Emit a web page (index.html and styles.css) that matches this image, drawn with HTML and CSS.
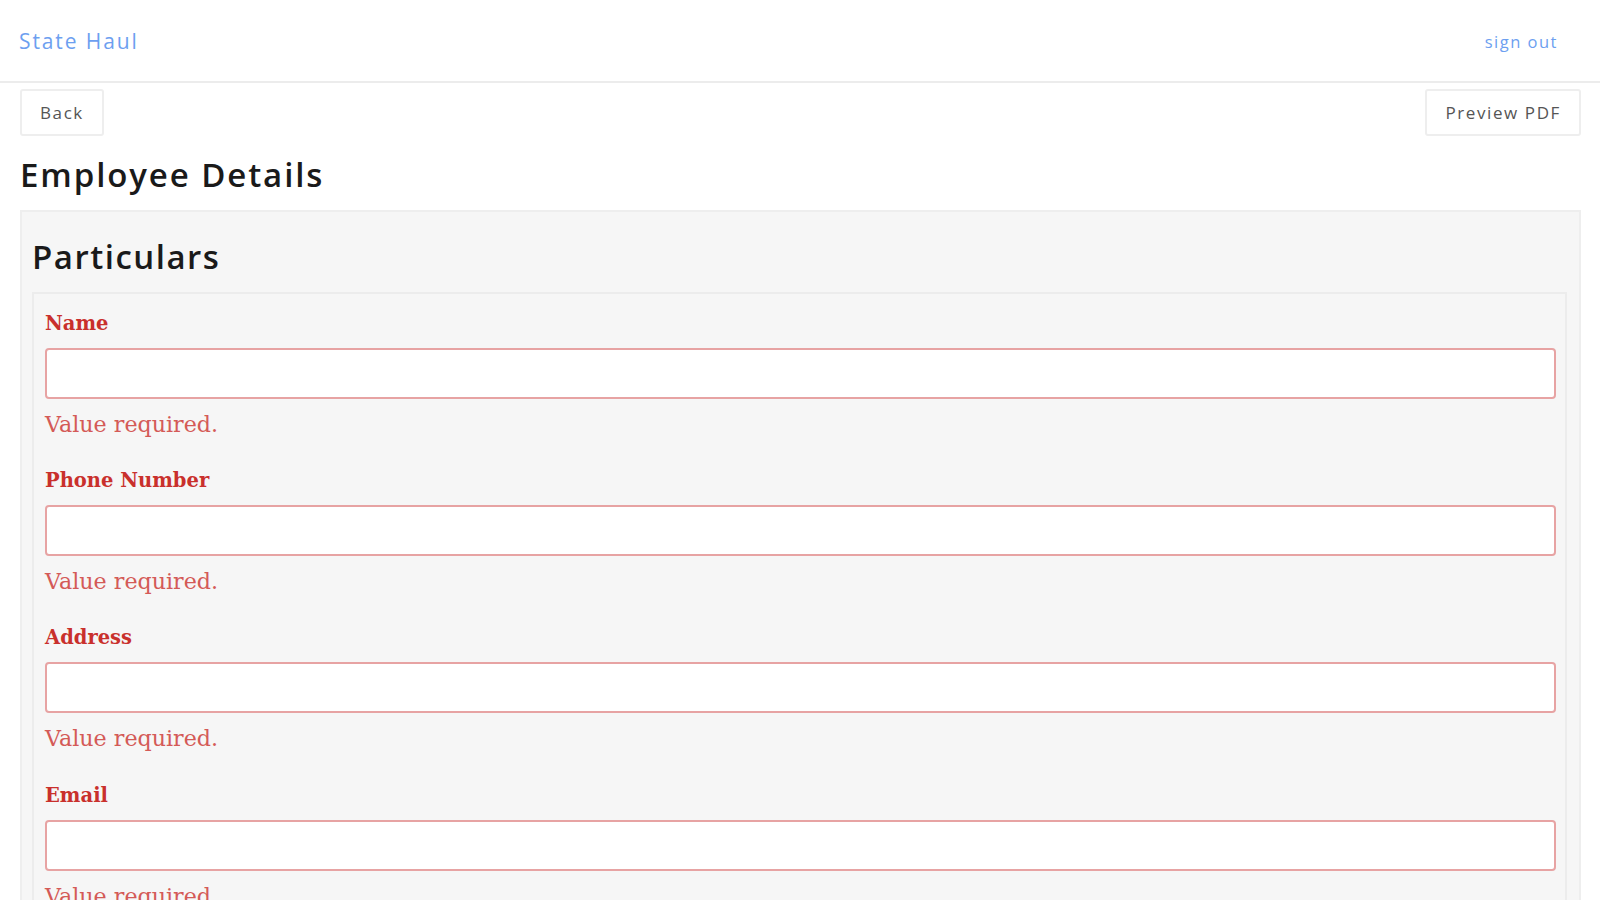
FILE: index.html
```html
<!DOCTYPE html>
<html lang="en">
<head>
<meta charset="utf-8">
<title>Employee Details</title>
<link rel="stylesheet" href="styles.css">
</head>
<body>
<header class="topbar">
  <a class="brand" href="#">State Haul</a>
  <a class="signout" href="#">sign out</a>
</header>
<main class="page">
  <div class="toolbar">
    <button class="btn">Back</button>
    <button class="btn">Preview PDF</button>
  </div>
  <h1 class="title">Employee Details</h1>
  <section class="panel">
    <h2 class="panel-title">Particulars</h2>
    <div class="fieldset">
      <div class="field">
        <label class="field-label">Name</label>
        <input class="field-input" type="text">
        <div class="field-error">Value required.</div>
      </div>
      <div class="field">
        <label class="field-label">Phone Number</label>
        <input class="field-input" type="text">
        <div class="field-error">Value required.</div>
      </div>
      <div class="field">
        <label class="field-label">Address</label>
        <input class="field-input" type="text">
        <div class="field-error">Value required.</div>
      </div>
      <div class="field">
        <label class="field-label">Email</label>
        <input class="field-input" type="text">
        <div class="field-error">Value required.</div>
      </div>
    </div>
  </section>
</main>
</body>
</html>
```
FILE: styles.css
```css
html, body {
  margin: 0;
  padding: 0;
  background: #ffffff;
}
body {
  font-family: "Open Sans", "Lato", sans-serif;
  color: #1a1a1a;
  overflow: hidden;
}
.topbar {
  height: 83px;
  border-bottom: 2px solid #ececec;
  display: flex;
  align-items: center;
  justify-content: space-between;
  padding: 0 42px 0 19px;
  box-sizing: border-box;
}
.brand {
  color: #6d9ff0;
  text-decoration: none;
  font-size: 21px;
  letter-spacing: 1.9px;
}
.signout {
  color: #6d9ff0;
  text-decoration: none;
  font-size: 16.5px;
  letter-spacing: 1.5px;
  padding-top: 2px;
}
.page {
  padding: 6px 19px 0 20px;
}
.toolbar {
  display: flex;
  justify-content: space-between;
}
.btn {
  font-family: "Open Sans", "Lato", sans-serif;
  font-size: 17px;
  letter-spacing: 1.6px;
  color: #555;
  background: #fff;
  border: 2px solid #eeeeee;
  border-radius: 3px;
  height: 47px;
  padding: 0 18px;
}
.title {
  font-size: 33px;
  font-weight: 600;
  margin: 18px 0 14px;
  line-height: 42px;
  letter-spacing: 1.9px;
}
.panel {
  background: #f6f6f6;
  border: 2px solid #eeeeee;
  padding: 0 12px 12px 10px;
}
.panel-title {
  font-size: 33px;
  font-weight: 600;
  margin: 24px 0 14px;
  line-height: 42px;
  letter-spacing: 1.5px;
}
.fieldset {
  border: 2px solid #ececec;
  padding: 16px 9px 0 11px;
}
.field {
  display: flex;
  flex-direction: column;
  padding-bottom: 11.2px;
}
.field-label {
  font-family: "DejaVu Serif", serif;
  font-weight: 700;
  font-size: 19.5px;
  color: #c9302c;
  line-height: 28px;
  margin-bottom: 10px;
}
.field-input {
  height: 51px;
  box-sizing: border-box;
  border: 2px solid #e7a3a3;
  border-radius: 4px;
  background: #fff;
  margin: 0;
}
.field-error {
  font-family: "DejaVu Serif", serif;
  font-size: 22.2px;
  color: #d45a57;
  line-height: 28px;
  margin-top: 11px;
  padding-bottom: 18px;
}
```
